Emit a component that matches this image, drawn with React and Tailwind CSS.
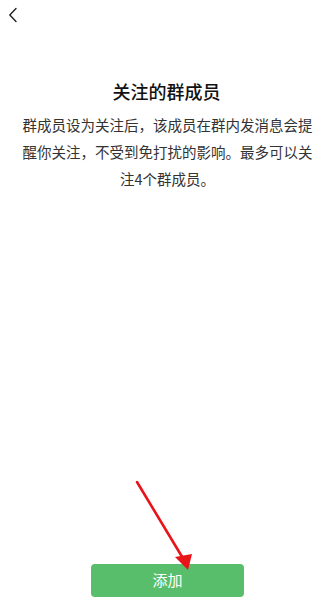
export default function App() {
  const font = { fontFamily: '"Noto Sans CJK SC", "Noto Sans", sans-serif' };
  return (
    <div className="relative w-[327px] h-[600px] bg-white flex flex-col overflow-hidden" style={font}>
      <div className="h-[30px] flex items-center pl-[8px]">
        <svg width="10" height="16" viewBox="0 0 10 16" fill="none">
          <path d="M8 1.5 L1.8 8 L8 14.5" stroke="#222" strokeWidth="1.4" strokeLinecap="round" strokeLinejoin="round" />
        </svg>
      </div>
      <h1 className="mt-[49px] pl-[6px] text-center text-[18px] leading-[25px] font-medium text-[#111]">关注的群成员</h1>
      <p className="mt-[7px] pl-[22px] pr-[14px] text-center text-[14.5px] leading-[27px] text-[#333]">
        <span className="block">群成员设为关注后，该成员在群内发消息会提</span>
        <span className="block">醒你关注，不受到免打扰的影响。最多可以关</span>
        <span className="block">注4个群成员。</span>
      </p>
      <div className="flex-1" />
      <div className="flex justify-center pb-[3px]">
        <button className="ml-[8px] w-[153px] h-[33px] rounded-[4px] bg-[#58be6b] text-white text-[15px] font-normal">添加</button>
      </div>
      <svg className="absolute left-0 top-0 pointer-events-none" width="327" height="600" viewBox="0 0 327 600">
        <line x1="137" y1="482" x2="184" y2="560" stroke="#e8141a" strokeWidth="2.6" strokeLinecap="round" />
        <polygon points="188,570 175,557 192,554" fill="#e8141a" />
      </svg>
    </div>
  );
}
